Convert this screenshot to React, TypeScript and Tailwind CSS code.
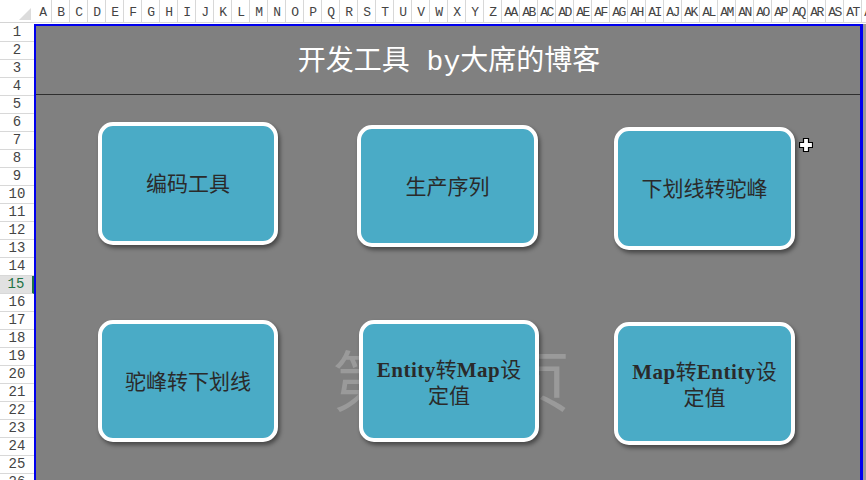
import React from 'react';

const letters = 'ABCDEFGHIJKLMNOPQRSTUVWXYZ'.split('');
const columns = [...letters, ...letters.slice(0, 22).map((l) => 'A' + l)];
const rows = Array.from({ length: 26 }, (_, i) => i + 1);

const cjk = { fontFamily: '"Liberation Mono", "Noto Sans CJK SC", monospace' };

type ToolButtonProps = {
    className: string;
    children: React.ReactNode;
};

const ToolButton: React.FC<ToolButtonProps> = ({ className, children }) => (
    <div
        className={`shrink-0 flex items-center justify-center text-center rounded-[15px] border-4 border-white bg-[#4aabc6] shadow-[2px_3px_4px_rgba(0,0,0,0.45)] text-[21px] leading-[26px] text-[#2a2a2a] ${className}`}
        style={cjk}
    >
        <div className="pt-[5px]">{children}</div>
    </div>
);

const Latin: React.FC<{ children: React.ReactNode }> = ({ children }) => (
    <span className="font-bold tracking-[0.5px]" style={{ fontFamily: '"Liberation Serif", serif' }}>
        {children}
    </span>
);

const App: React.FC = () => {
    return (
        <div className="relative w-[866px] h-[480px] overflow-hidden bg-white" style={{ fontFamily: '"Liberation Mono", monospace' }}>
            {/* column headers */}
            <div className="flex h-[24px]">
                <div className="w-[34px] shrink-0 h-[23px] border-b border-[#d4d4d4] flex items-end justify-end pr-[3px] pb-[2px]">
                    <svg width="12" height="12" viewBox="0 0 12 12">
                        <polygon points="12,0 12,12 0,12" fill="#dcdcdc" />
                    </svg>
                </div>
                {columns.map((c) => (
                    <div
                        key={c}
                        className="w-[18px] shrink-0 h-[23px] border-b border-r border-[#d8d8d8] flex items-end justify-center pb-[1px] text-[13px] leading-[16px] text-[#444] overflow-hidden whitespace-nowrap tracking-[-1.5px]"
                    >
                        {c}
                    </div>
                ))}
            </div>

            <div className="flex">
                {/* row headers */}
                <div className="w-[34px] shrink-0">
                    {rows.map((r) =>
                        r === 15 ? (
                            <div
                                key={r}
                                className="h-[18px] border-b border-[#d8d8d8] border-r-2 border-r-[#217346] bg-[#e1e1e1] flex items-center justify-center text-[14px] text-[#217346]"
                            >
                                {r}
                            </div>
                        ) : (
                            <div
                                key={r}
                                className="h-[18px] border-b border-[#d8d8d8] flex items-center justify-center text-[14px] text-[#444]"
                            >
                                {r}
                            </div>
                        )
                    )}
                </div>

                {/* print area */}
                <div className="w-[829px] shrink-0 h-[456px] bg-[#808080] border-l-2 border-t-2 border-r-[3px] border-[#0000ee] relative">
                    {/* page watermark */}
                    <div
                        className="absolute left-[296px] top-[323px] w-[230px] text-center text-[66px] leading-[70px] text-[#9a9a9a] tracking-[10px] whitespace-nowrap"
                        style={{ fontFamily: '"Liberation Serif", "Noto Sans CJK SC", serif' }}
                    >
                        第 1 页
                    </div>

                    <div className="relative">
                        <div className="h-[69px] border-b border-[#2e2e2e] flex items-center justify-center">
                            <div className="text-[28px] text-white mt-[5px] ml-[2px]" style={cjk}>
                                开发工具 by大席的博客
                            </div>
                        </div>

                        <div className="flex h-[198px] pl-[62px]">
                            <ToolButton className="w-[180px] h-[123px] mt-[27px]">编码工具</ToolButton>
                            <ToolButton className="w-[181px] h-[122px] mt-[30px] ml-[79px]">生产序列</ToolButton>
                            <ToolButton className="w-[181px] h-[123px] mt-[32px] ml-[76px]">下划线转驼峰</ToolButton>
                        </div>

                        <div className="flex pl-[62px]">
                            <ToolButton className="w-[180px] h-[122px] mt-[27px]">驼峰转下划线</ToolButton>
                            <ToolButton className="w-[180px] h-[122px] mt-[27px] ml-[81px]">
                                <Latin>Entity</Latin>转<Latin>Map</Latin>设
                                <br />
                                定值
                            </ToolButton>
                            <ToolButton className="w-[181px] h-[123px] mt-[29px] ml-[75px]">
                                <Latin>Map</Latin>转<Latin>Entity</Latin>设
                                <br />
                                定值
                            </ToolButton>
                        </div>
                    </div>

                    {/* cursor */}
                    <svg className="absolute left-[763px] top-[112px]" width="14" height="14" viewBox="0 0 14 14">
                        <path d="M4.5 0.5h5v4h4v5h-4v4h-5v-4h-4v-5h4z" fill="white" stroke="black" strokeWidth="1.2" />
                    </svg>
                </div>

                <div className="flex-1 h-[456px] bg-[#9a9a9a]" />
            </div>
        </div>
    );
};

export default App;
